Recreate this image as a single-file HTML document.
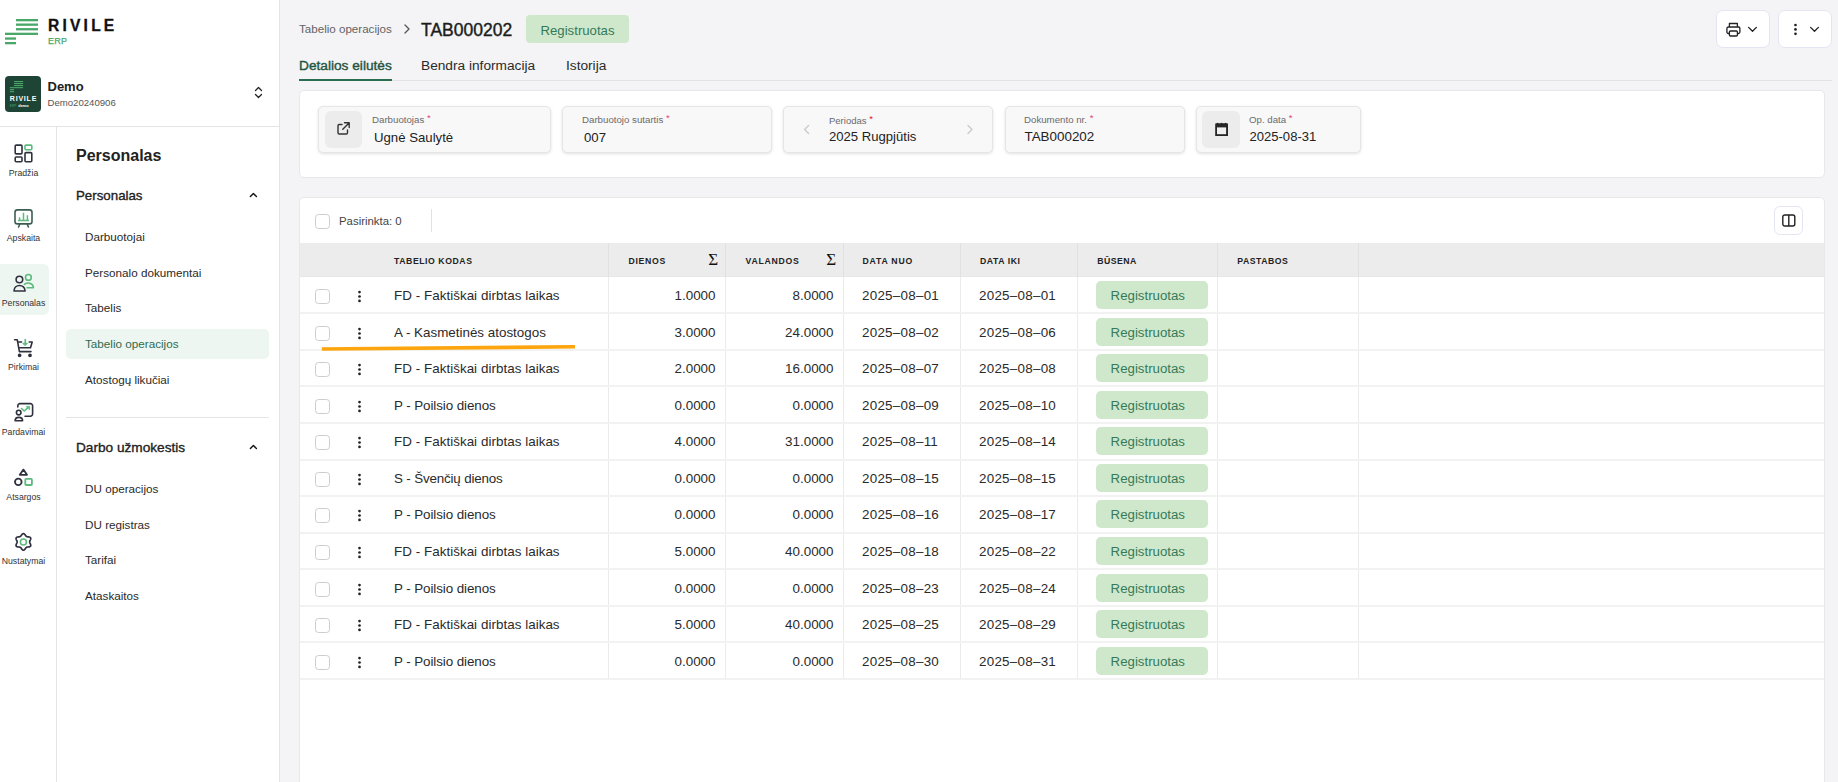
<!DOCTYPE html>
<html lang="lt">
<head>
<meta charset="utf-8">
<title>Tabelio operacijos</title>
<style>
*{box-sizing:border-box;margin:0;padding:0}
html,body{width:1838px;height:782px;overflow:hidden}
body{font-family:"Liberation Sans",sans-serif;background:#f4f4f6;color:#222;position:relative;font-size:13px}
.abs{position:absolute}
#side{position:absolute;left:0;top:0;width:280px;height:782px;background:#fff;border-right:1px solid #e4e4e7}
#rail{position:absolute;left:0;top:127px;width:57px;height:655px;border-right:1px solid #e4e4e7}
#sidehr{position:absolute;left:0;top:126px;width:280px;height:1px;background:#e4e4e7}
.t{position:absolute;white-space:nowrap;line-height:1}
.ri{position:absolute;left:0;width:47px;text-align:center;font-size:8.700px;color:#333;line-height:1}
.mi{position:absolute;left:85px;font-size:11.7px;color:#2a2a2a;line-height:1;white-space:nowrap}

.btn{background:#fff;border:1px solid #e3e6f0;border-radius:7px}
.card{background:#fff;border:1px solid #e8e8eb;border-radius:5px}
.fld{background:#f8f8f9;border:1px solid #e6e6e8;border-radius:5px;box-shadow:0 1px 3px rgba(0,0,0,.12)}
.ib{width:37px;height:37px;border-radius:6px;background:#ececec}
.lb{font-size:9.7px;color:#6a6a6a}
.rq{color:#e0457b;position:relative;top:-2px}
.vl{font-size:13.2px;color:#222}
.cb{width:15px;height:15px;border:1px solid #cdcdd0;border-radius:3.500px;background:#fff}
.th{position:absolute;top:257px;font-size:8.700px;font-weight:700;letter-spacing:.7px;color:#222;line-height:1;white-space:nowrap}
.vln{position:absolute;top:277px;width:1px;height:403px;background:#ebebec}
.vlh{position:absolute;top:243px;width:1px;height:34px;background:#e1e1e2}
.hl{position:absolute;left:300px;width:1524px;height:2px;background:#f2f2f3}
.c{position:absolute;font-size:13.400px;color:#2a2a2a;line-height:1;white-space:nowrap}
.r{text-align:right}
.bd{position:absolute;left:1096px;width:112px;height:28px;border-radius:5px;background:#cfe8cc;color:#357a58;font-size:13.250px;line-height:30px;padding-left:14.600px;overflow:hidden}
.dt{letter-spacing:.26px}
.sh{font-size:13.3px;color:#222;-webkit-text-stroke:.35px #222}
svg{overflow:visible}
</style>
</head>
<body>
<div id="side">
  <div id="sidehr"></div>
  <div id="rail"></div>

  <svg class="abs" style="left:0;top:0" width="60" height="60" viewBox="0 0 60 60">
    <g fill="#49a869">
      <rect x="16" y="19" width="22" height="2.3"/>
      <rect x="16" y="23.5" width="22" height="2.3"/>
      <rect x="16" y="28.1" width="22" height="2.3"/>
      <rect x="5" y="32.7" width="33" height="2.3"/>
      <rect x="5" y="37.4" width="11" height="2.3"/>
      <rect x="5" y="42" width="11" height="2.3"/>
    </g>
  </svg>
  <div class="t" id="lg1" style="left:48px;top:18.200px;font-size:15.600px;font-weight:700;letter-spacing:3.200px;color:#111;-webkit-text-stroke:.3px #111">RIVILE</div>
  <div class="t" id="lg2" style="left:48px;top:37px;font-size:9px;letter-spacing:.3px;color:#49a869;-webkit-text-stroke:.25px #49a869">ERP</div>

  <div class="abs" style="left:5px;top:76px;width:36px;height:36px;border-radius:4px;background:#1d4434"></div>
  <svg class="abs" style="left:5px;top:76px" width="36" height="36" viewBox="0 0 36 36">
    <g fill="#49a869">
      <rect x="9.1" y="5" width="9" height="1.1"/>
      <rect x="9.1" y="7" width="9" height="1.1"/>
      <rect x="9.1" y="9" width="9" height="1.1"/>
      <rect x="4.85" y="11.1" width="13.25" height="1.1"/>
      <rect x="4.85" y="13.1" width="4.25" height="1.1"/>
      <rect x="4.85" y="15.1" width="4.25" height="1.1"/>
    </g>
    <text x="4.85" y="25.1" font-family="Liberation Sans, sans-serif" font-size="7" font-weight="700" fill="#fff" letter-spacing=".78">RIVILE</text>
    <text x="4.85" y="30.9" font-family="Liberation Sans, sans-serif" font-size="3.4" fill="#49a869" textLength="6.6" lengthAdjust="spacingAndGlyphs">ERP</text>
    <text x="13.3" y="30.9" font-family="Liberation Sans, sans-serif" font-size="3.6" font-weight="700" fill="#fff" textLength="10.4" lengthAdjust="spacingAndGlyphs">demo</text>
  </svg>
  <div class="t" style="left:47.500px;top:80px;font-size:13px;font-weight:700;color:#222">Demo</div>
  <div class="t" style="left:47.500px;top:98px;font-size:9.600px;color:#555">Demo20240906</div>
  <svg class="abs" style="left:252px;top:84px" width="12" height="16" viewBox="0 0 12 16" fill="none" stroke="#222" stroke-width="1.3" stroke-linecap="round" stroke-linejoin="round"><g transform="translate(0.5 0.5)"><path d="M3 6 L6 3 L9 6"/><path d="M3 10 L6 13 L9 10"/></g></svg>
  <div class="abs" style="left:0;top:264px;width:49px;height:51px;border-radius:0 6px 6px 0;background:#eef6f1"></div>
  <div class="ri" style="top:169px">Pradžia</div>
  <div class="ri" style="top:234px">Apskaita</div>
  <div class="ri" style="top:299px">Personalas</div>
  <div class="ri" style="top:363px">Pirkimai</div>
  <div class="ri" style="top:428px">Pardavimai</div>
  <div class="ri" style="top:493px">Atsargos</div>
  <div class="ri" style="top:557px">Nustatymai</div>


  <svg class="abs" style="left:0;top:0" width="57" height="782" viewBox="0 0 57 782" fill="none" stroke-width="1.6" stroke-linecap="round" stroke-linejoin="round">
    <!-- Pradzia -->
    <g stroke="#2f323e">
      <rect x="15.2" y="145.1" width="6.8" height="8.8" rx="1"/>
      <rect x="15.2" y="157" width="6.8" height="4.8" rx="1"/>
      <rect x="25" y="152.6" width="6.8" height="9.2" rx="1"/>
    </g>
    <rect x="25" y="145.1" width="6.8" height="4.6" rx="1" stroke="#5cba7d"/>
    <!-- Apskaita -->
    <g stroke="#3c5e51">
      <rect x="15" y="209.9" width="17" height="14" rx="2.4"/>
      <path d="M19.6 224.5 L18.6 227 M27.4 224.5 L28.4 227"/>
    </g>
    <g stroke="#5cba7d" stroke-width="1.5" stroke-linecap="butt">
      <path d="M19.6 220.6 V217.3 M23.5 220.6 V212.8 M27.4 220.6 V215.3 M18 220.4 H29"/>
    </g>
    <!-- Personalas -->
    <g stroke="#2f323e">
      <circle cx="19.4" cy="279.5" r="3.3"/>
      <path d="M14 291 C14 283.600 25.100 283.600 25.100 291 Z"/>
    </g>
    <g stroke="#5cba7d">
      <circle cx="28.4" cy="277.400" r="2.9"/>
      <path d="M24.400 284.300 C28.500 281.600 33.400 283.600 33.400 287.700 H27"/>
    </g>
    <!-- Pirkimai -->
    <g stroke="#2f323e">
      <path d="M14.600 339.800 H17.300 L19.400 351.600 H31"/>
      <path d="M18.300 342 H21.600 M29.200 342 H32.200 L30.500 347.700 H19.500"/>
      <circle cx="19.600" cy="355.300" r="1.100" fill="#2f323e"/>
      <circle cx="30" cy="355.300" r="1.100" fill="#2f323e"/>
    </g>
    <g stroke="#5cba7d" fill="#5cba7d">
      <path d="M25.300 339.600 V343" />
      <path d="M23.200 343.300 H27.400 L25.300 345.400 Z" stroke-width="1"/>
    </g>
    <!-- Pardavimai -->
    <g stroke="#2f323e">
      <path d="M17.800 407 V405.800 A2.200 2.200 0 0 1 20 403.600 H30.400 A2.200 2.200 0 0 1 32.600 405.800 V414 A2.200 2.200 0 0 1 30.400 416.200 H25"/>
      <circle cx="18.700" cy="412.600" r="2.300"/>
      <path d="M15.100 420.800 C15.100 416.200 22.600 416.200 22.600 420.800 Z"/>
    </g>
    <g stroke="#5cba7d" fill="#5cba7d">
      <path d="M21.500 408.500 L24.200 411 L28 407.600" fill="none"/>
      <path d="M26.600 406.400 H29.600 V409.600 Z" stroke-width=".8"/>
    </g>
    <!-- Atsargos -->
    <g stroke="#2f323e" stroke-width="1.8">
      <path d="M23.400 469.600 L27 474.800 H19.800 Z"/>
      <circle cx="18.300" cy="481.900" r="3.300"/>
    </g>
    <rect x="25.300" y="478.900" width="6.600" height="6.100" rx=".8" stroke="#5cba7d" stroke-width="1.8"/>
    <!-- Nustatymai -->
    <path d="M23.40 533.60 L24.11 533.80 L24.73 534.34 L25.24 535.03 L25.67 535.67 L26.09 536.14 L26.55 536.44 L27.05 536.69 L27.66 536.82 L28.43 536.87 L29.28 536.97 L30.06 537.24 L30.59 537.75 L30.77 538.47 L30.61 539.27 L30.27 540.06 L29.93 540.75 L29.74 541.35 L29.70 541.90 L29.74 542.45 L29.93 543.05 L30.27 543.74 L30.61 544.53 L30.77 545.33 L30.59 546.05 L30.06 546.56 L29.28 546.83 L28.43 546.93 L27.66 546.98 L27.05 547.11 L26.55 547.36 L26.09 547.66 L25.67 548.13 L25.24 548.77 L24.73 549.46 L24.11 550.00 L23.40 550.20 L22.69 550.00 L22.07 549.46 L21.56 548.77 L21.13 548.13 L20.71 547.66 L20.25 547.36 L19.75 547.11 L19.14 546.98 L18.37 546.93 L17.52 546.83 L16.74 546.56 L16.21 546.05 L16.03 545.33 L16.19 544.53 L16.53 543.74 L16.87 543.05 L17.06 542.45 L17.10 541.90 L17.06 541.35 L16.87 540.75 L16.53 540.06 L16.19 539.27 L16.03 538.47 L16.21 537.75 L16.74 537.24 L17.52 536.97 L18.37 536.87 L19.14 536.82 L19.75 536.69 L20.25 536.44 L20.71 536.14 L21.13 535.67 L21.56 535.03 L22.07 534.34 L22.69 533.80Z" stroke="#2f323e" stroke-width="1.7"/>
    <circle cx="23.400" cy="541.900" r="3" stroke="#5cba7d" stroke-width="1.5"/>
  </svg>
  <div class="t" id="h1" style="left:76px;top:148px;font-size:16px;font-weight:700;color:#222">Personalas</div>
  <div class="t sh" id="h2" style="left:76px;top:189px">Personalas</div>
  <svg class="abs" style="left:248px;top:190px" width="10" height="10" viewBox="0 0 10 10" fill="none" stroke="#111" stroke-width="1.4" stroke-linecap="round" stroke-linejoin="round"><g transform="translate(0.4 0.0)"><path d="M2 6.5 L5 3.5 L8 6.5"/></g></svg>
  <div class="abs" style="left:66px;top:329px;width:203px;height:30px;border-radius:5px;background:#eef6f1"></div>
  <div class="mi" style="top:231px">Darbuotojai</div>
  <div class="mi" style="top:267px">Personalo dokumentai</div>
  <div class="mi" style="top:302px">Tabelis</div>
  <div class="mi" style="top:338px;color:#2f6b50">Tabelio operacijos</div>
  <div class="mi" style="top:374px">Atostogų likučiai</div>
  <div class="abs" style="left:66px;top:417px;width:203px;height:1px;background:#e4e4e7"></div>
  <div class="t sh" id="h3" style="left:76px;top:441px;font-size:13.650px">Darbo užmokestis</div>
  <svg class="abs" style="left:248px;top:442px" width="10" height="10" viewBox="0 0 10 10" fill="none" stroke="#111" stroke-width="1.4" stroke-linecap="round" stroke-linejoin="round"><g transform="translate(0.4 0.0)"><path d="M2 6.5 L5 3.5 L8 6.5"/></g></svg>
  <div class="mi" style="top:483px">DU operacijos</div>
  <div class="mi" style="top:519px">DU registras</div>
  <div class="mi" style="top:554px">Tarifai</div>
  <div class="mi" style="top:590px">Ataskaitos</div>
</div>
<div id="main">
  <div class="t" style="left:299px;top:23px;font-size:11.600px;color:#636363">Tabelio operacijos</div>
  <svg class="abs" style="left:402px;top:23px" width="10" height="12" viewBox="0 0 10 12" fill="none" stroke="#555" stroke-width="1.3" stroke-linecap="round" stroke-linejoin="round"><path d="M3 2 L7 6 L3 10"/></svg>
  <div class="t" style="left:421px;top:22px;font-size:17.5px;color:#1c1c1c;-webkit-text-stroke:.4px #1c1c1c">TAB000202</div>
  <div class="abs" style="left:526px;top:15px;width:103px;height:28px;border-radius:4px;background:#cfe8cc"></div>
  <div class="t" style="left:540.5px;top:24px;font-size:13.2px;color:#357a58">Registruotas</div>

  <div class="abs btn" style="left:1716px;top:10px;width:54px;height:38px"></div>
  <div class="abs btn" style="left:1778px;top:10px;width:54px;height:38px"></div>
  <svg class="abs" style="left:1725px;top:21px" width="16" height="16" viewBox="0 0 16 16" fill="none" stroke="#222" stroke-width="1.3" stroke-linejoin="round"><g transform="translate(0.4 0.5)"><path d="M4 5.5V2h8v3.5"/><rect x="1.5" y="5.5" width="13" height="6.5" rx="1.5"/><rect x="4" y="9.5" width="8" height="5" rx="1" fill="#fff"/></g></svg>
  <svg class="abs" style="left:1747px;top:25px" width="10" height="8" viewBox="0 0 10 8" fill="none" stroke="#222" stroke-width="1.3" stroke-linecap="round" stroke-linejoin="round"><g transform="translate(0.5 0.35)"><path d="M1.100 2 L5 5.900 L8.900 2"/></g></svg>
  <svg class="abs" style="left:1792px;top:22px" width="6" height="14" viewBox="0 0 6 14" fill="#222"><g transform="translate(0.5 0.4)"><circle cx="3" cy="2.600" r="1.350"/><circle cx="3" cy="7" r="1.350"/><circle cx="3" cy="11.400" r="1.350"/></g></svg>
  <svg class="abs" style="left:1809px;top:25px" width="10" height="8" viewBox="0 0 10 8" fill="none" stroke="#222" stroke-width="1.3" stroke-linecap="round" stroke-linejoin="round"><g transform="translate(0.5 0.35)"><path d="M1.100 2 L5 5.900 L8.900 2"/></g></svg>

  <div class="abs" style="left:299px;top:80px;width:1533px;height:1px;background:#e2e2e6"></div>
  <div class="abs" style="left:299px;top:79px;width:93px;height:2px;background:#2b6e4f"></div>
  <div class="t" style="left:299px;top:59px;font-size:13.7px;color:#24543e;-webkit-text-stroke:.4px #24543e">Detalios eilutės</div>
  <div class="t" style="left:421px;top:59px;font-size:13.7px;color:#2a2a2a">Bendra informacija</div>
  <div class="t" style="left:566px;top:59px;font-size:13.7px;color:#2a2a2a">Istorija</div>

  <div class="abs card" style="left:299px;top:90px;width:1526px;height:88px"></div>
  <div class="abs fld" style="left:318px;top:106px;width:233px;height:47px"></div>
  <div class="abs fld" style="left:562px;top:106px;width:210px;height:47px"></div>
  <div class="abs fld" style="left:783px;top:106px;width:210px;height:47px"></div>
  <div class="abs fld" style="left:1005px;top:106px;width:180px;height:47px"></div>
  <div class="abs fld" style="left:1196px;top:106px;width:165px;height:47px"></div>
  <div class="abs ib" style="left:325px;top:111px"></div>
  <div class="abs ib" style="left:1202px;top:111px;width:38px"></div>
  <svg class="abs" style="left:336px;top:121px" width="15" height="15" viewBox="0 0 15 15" fill="none" stroke="#333" stroke-width="1.4" stroke-linecap="round" stroke-linejoin="round"><path d="M6 3.5H3.2a1.2 1.2 0 0 0-1.2 1.2v7.1a1.2 1.2 0 0 0 1.2 1.2h7.1a1.2 1.2 0 0 0 1.2-1.2V9"/><path d="M8.5 1.8h4.7v4.7M13 2 L6.8 8.2"/></svg>
  <svg class="abs" style="left:1210px;top:118px" width="24" height="24" viewBox="1210 118 24 24"><path d="M1215.200 124.200 q0-.9 .9-.9 h.5 l1-.5 1 .5 h2 l1-.5 1 .5 h2 l1-.5 1 .5 h.5 q.9 0 .9 .9 V135.900 H1215.200 Z" fill="#262626"/><rect x="1217" y="127.400" width="9.100" height="6.800" fill="#f0f0f0"/></svg>

  <div class="t lb" style="left:372px;top:115px">Darbuotojas <span class="rq">*</span></div>
  <div class="t vl" style="left:374px;top:131px">Ugnė Saulytė</div>
  <div class="t lb" style="left:582px;top:115px">Darbuotojo sutartis <span class="rq">*</span></div>
  <div class="t vl" style="left:584px;top:131px">007</div>
  <div class="t lb" style="left:829px;top:116px;font-size:9.5px">Periodas <span class="rq" style="color:#d22">*</span></div>
  <div class="t vl" style="left:829px;top:130px;font-size:13.1px">2025 Rugpjūtis</div>
  <svg class="abs" style="left:802px;top:123px" width="8" height="12" viewBox="0 0 8 12" fill="none" stroke="#cbcbcd" stroke-width="1.4" stroke-linecap="round" stroke-linejoin="round"><g transform="translate(0.6 0.4)"><path d="M6 2 L2 6 L6 10"/></g></svg>
  <svg class="abs" style="left:966px;top:123px" width="8" height="12" viewBox="0 0 8 12" fill="none" stroke="#cbcbcd" stroke-width="1.4" stroke-linecap="round" stroke-linejoin="round"><g transform="translate(0.0 0.4)"><path d="M2 2 L6 6 L2 10"/></g></svg>
  <div class="t lb" style="left:1024px;top:115px">Dokumento nr. <span class="rq">*</span></div>
  <div class="t vl" style="left:1024.5px;top:130.300px;font-size:13.4px">TAB000202</div>
  <div class="t lb" style="left:1249px;top:115px">Op. data <span class="rq">*</span></div>
  <div class="t vl" style="left:1249.5px;top:130.300px;font-size:13.05px">2025-08-31</div>

  <div class="abs card" style="left:299px;top:197px;width:1526px;height:600px"></div>
  <div class="abs cb" style="left:315px;top:214px"></div>
  <div class="t" style="left:339px;top:216px;font-size:11.400px;color:#444">Pasirinkta: 0</div>
  <div class="abs" style="left:431px;top:209px;width:1px;height:23px;background:#e2e2e6"></div>
  <div class="abs btn" style="left:1774px;top:206px;width:29px;height:29px;border-radius:6px"></div>
  <svg class="abs" style="left:1781px;top:213px" width="15" height="14" viewBox="0 0 15 14" fill="none" stroke="#222" stroke-width="1.4" stroke-linejoin="round"><g transform="translate(0.3 0.5)"><rect x="1.5" y="1.5" width="12" height="11" rx="2"/><path d="M7.5 1.5v11"/></g></svg>
<!--TB-->
  <div class="abs" style="left:300px;top:243px;width:1524px;height:34px;background:#ececec;border-bottom:1px solid #e7e7e7"></div>
  <div class="th" style="left:394px;letter-spacing:0.56px">TABELIO KODAS</div>
  <div class="th" style="left:628.5px;letter-spacing:0.7px">DIENOS</div>
  <div class="th" style="left:745.5px;letter-spacing:0.75px">VALANDOS</div>
  <div class="th" style="left:862.5px;letter-spacing:0.78px">DATA NUO</div>
  <div class="th" style="left:980px;letter-spacing:0.55px">DATA IKI</div>
  <div class="th" style="left:1097.3px;letter-spacing:0.48px">BŪSENA</div>
  <div class="th" style="left:1237.3px;letter-spacing:0.5px">PASTABOS</div>
  <div class="t" style="left:708.2px;top:251px;font-size:17px;font-family:'Liberation Serif',serif;color:#111">Σ</div>
  <div class="t" style="left:826.2px;top:251px;font-size:17px;font-family:'Liberation Serif',serif;color:#111">Σ</div>
  <div class="vln" style="left:608px"></div><div class="vlh" style="left:608px"></div>
  <div class="vln" style="left:725px"></div><div class="vlh" style="left:725px"></div>
  <div class="vln" style="left:843px"></div><div class="vlh" style="left:843px"></div>
  <div class="vln" style="left:960px"></div><div class="vlh" style="left:960px"></div>
  <div class="vln" style="left:1077px"></div><div class="vlh" style="left:1077px"></div>
  <div class="vln" style="left:1217px"></div><div class="vlh" style="left:1217px"></div>
  <div class="vln" style="left:1358px"></div><div class="vlh" style="left:1358px"></div>
  <div class="hl" style="top:312px"></div>
  <div class="abs cb" style="left:315px;top:289px"></div>
  <svg class="abs" style="left:356px;top:289px" width="6" height="15" viewBox="0 0 6 15" fill="#222"><g transform="translate(0.5 0.0)"><circle cx="3" cy="3.1" r="1.35"/><circle cx="3" cy="7.500" r="1.35"/><circle cx="3" cy="11.900" r="1.35"/></g></svg>
  <div class="c" style="left:394px;top:288.5px;letter-spacing:0.04px">FD - Faktiškai dirbtas laikas</div>
  <div class="c r" style="left:615px;width:100.500px;top:288.5px">1.0000</div>
  <div class="c r" style="left:733px;width:100.500px;top:288.5px">8.0000</div>
  <div class="c dt" style="left:862px;top:288.5px">2025–08–01</div>
  <div class="c dt" style="left:979px;top:288.5px">2025–08–01</div>
  <div class="bd" style="top:281px">Registruotas</div>
  <div class="hl" style="top:349px"></div>
  <div class="abs cb" style="left:315px;top:326px"></div>
  <svg class="abs" style="left:356px;top:326px" width="6" height="15" viewBox="0 0 6 15" fill="#222"><g transform="translate(0.5 0.0)"><circle cx="3" cy="3.1" r="1.35"/><circle cx="3" cy="7.500" r="1.35"/><circle cx="3" cy="11.900" r="1.35"/></g></svg>
  <div class="c" style="left:394px;top:325.5px;letter-spacing:0.0px">A - Kasmetinės atostogos</div>
  <div class="c r" style="left:615px;width:100.500px;top:325.5px">3.0000</div>
  <div class="c r" style="left:733px;width:100.500px;top:325.5px">24.0000</div>
  <div class="c dt" style="left:862px;top:325.5px">2025–08–02</div>
  <div class="c dt" style="left:979px;top:325.5px">2025–08–06</div>
  <div class="bd" style="top:318px">Registruotas</div>
  <div class="hl" style="top:385px"></div>
  <div class="abs cb" style="left:315px;top:362px"></div>
  <svg class="abs" style="left:356px;top:362px" width="6" height="15" viewBox="0 0 6 15" fill="#222"><g transform="translate(0.5 0.0)"><circle cx="3" cy="3.1" r="1.35"/><circle cx="3" cy="7.500" r="1.35"/><circle cx="3" cy="11.900" r="1.35"/></g></svg>
  <div class="c" style="left:394px;top:361.5px;letter-spacing:0.04px">FD - Faktiškai dirbtas laikas</div>
  <div class="c r" style="left:615px;width:100.500px;top:361.5px">2.0000</div>
  <div class="c r" style="left:733px;width:100.500px;top:361.5px">16.0000</div>
  <div class="c dt" style="left:862px;top:361.5px">2025–08–07</div>
  <div class="c dt" style="left:979px;top:361.5px">2025–08–08</div>
  <div class="bd" style="top:354px">Registruotas</div>
  <div class="hl" style="top:422px"></div>
  <div class="abs cb" style="left:315px;top:399px"></div>
  <svg class="abs" style="left:356px;top:399px" width="6" height="15" viewBox="0 0 6 15" fill="#222"><g transform="translate(0.5 0.0)"><circle cx="3" cy="3.1" r="1.35"/><circle cx="3" cy="7.500" r="1.35"/><circle cx="3" cy="11.900" r="1.35"/></g></svg>
  <div class="c" style="left:394px;top:398.5px;letter-spacing:-0.09px">P - Poilsio dienos</div>
  <div class="c r" style="left:615px;width:100.500px;top:398.5px">0.0000</div>
  <div class="c r" style="left:733px;width:100.500px;top:398.5px">0.0000</div>
  <div class="c dt" style="left:862px;top:398.5px">2025–08–09</div>
  <div class="c dt" style="left:979px;top:398.5px">2025–08–10</div>
  <div class="bd" style="top:391px">Registruotas</div>
  <div class="hl" style="top:459px"></div>
  <div class="abs cb" style="left:315px;top:435px"></div>
  <svg class="abs" style="left:356px;top:435px" width="6" height="15" viewBox="0 0 6 15" fill="#222"><g transform="translate(0.5 0.0)"><circle cx="3" cy="3.1" r="1.35"/><circle cx="3" cy="7.500" r="1.35"/><circle cx="3" cy="11.900" r="1.35"/></g></svg>
  <div class="c" style="left:394px;top:434.5px;letter-spacing:0.04px">FD - Faktiškai dirbtas laikas</div>
  <div class="c r" style="left:615px;width:100.500px;top:434.5px">4.0000</div>
  <div class="c r" style="left:733px;width:100.500px;top:434.5px">31.0000</div>
  <div class="c dt" style="left:862px;top:434.5px">2025–08–11</div>
  <div class="c dt" style="left:979px;top:434.5px">2025–08–14</div>
  <div class="bd" style="top:427px">Registruotas</div>
  <div class="hl" style="top:495px"></div>
  <div class="abs cb" style="left:315px;top:472px"></div>
  <svg class="abs" style="left:356px;top:472px" width="6" height="15" viewBox="0 0 6 15" fill="#222"><g transform="translate(0.5 0.0)"><circle cx="3" cy="3.1" r="1.35"/><circle cx="3" cy="7.500" r="1.35"/><circle cx="3" cy="11.900" r="1.35"/></g></svg>
  <div class="c" style="left:394px;top:471.5px;letter-spacing:-0.17px">S - Švenčių dienos</div>
  <div class="c r" style="left:615px;width:100.500px;top:471.5px">0.0000</div>
  <div class="c r" style="left:733px;width:100.500px;top:471.5px">0.0000</div>
  <div class="c dt" style="left:862px;top:471.5px">2025–08–15</div>
  <div class="c dt" style="left:979px;top:471.5px">2025–08–15</div>
  <div class="bd" style="top:464px">Registruotas</div>
  <div class="hl" style="top:532px"></div>
  <div class="abs cb" style="left:315px;top:508px"></div>
  <svg class="abs" style="left:356px;top:508px" width="6" height="15" viewBox="0 0 6 15" fill="#222"><g transform="translate(0.5 0.0)"><circle cx="3" cy="3.1" r="1.35"/><circle cx="3" cy="7.500" r="1.35"/><circle cx="3" cy="11.900" r="1.35"/></g></svg>
  <div class="c" style="left:394px;top:507.5px;letter-spacing:-0.09px">P - Poilsio dienos</div>
  <div class="c r" style="left:615px;width:100.500px;top:507.5px">0.0000</div>
  <div class="c r" style="left:733px;width:100.500px;top:507.5px">0.0000</div>
  <div class="c dt" style="left:862px;top:507.5px">2025–08–16</div>
  <div class="c dt" style="left:979px;top:507.5px">2025–08–17</div>
  <div class="bd" style="top:500px">Registruotas</div>
  <div class="hl" style="top:568px"></div>
  <div class="abs cb" style="left:315px;top:545px"></div>
  <svg class="abs" style="left:356px;top:545px" width="6" height="15" viewBox="0 0 6 15" fill="#222"><g transform="translate(0.5 0.0)"><circle cx="3" cy="3.1" r="1.35"/><circle cx="3" cy="7.500" r="1.35"/><circle cx="3" cy="11.900" r="1.35"/></g></svg>
  <div class="c" style="left:394px;top:544.5px;letter-spacing:0.04px">FD - Faktiškai dirbtas laikas</div>
  <div class="c r" style="left:615px;width:100.500px;top:544.5px">5.0000</div>
  <div class="c r" style="left:733px;width:100.500px;top:544.5px">40.0000</div>
  <div class="c dt" style="left:862px;top:544.5px">2025–08–18</div>
  <div class="c dt" style="left:979px;top:544.5px">2025–08–22</div>
  <div class="bd" style="top:537px">Registruotas</div>
  <div class="hl" style="top:605px"></div>
  <div class="abs cb" style="left:315px;top:582px"></div>
  <svg class="abs" style="left:356px;top:582px" width="6" height="15" viewBox="0 0 6 15" fill="#222"><g transform="translate(0.5 0.0)"><circle cx="3" cy="3.1" r="1.35"/><circle cx="3" cy="7.500" r="1.35"/><circle cx="3" cy="11.900" r="1.35"/></g></svg>
  <div class="c" style="left:394px;top:581.5px;letter-spacing:-0.09px">P - Poilsio dienos</div>
  <div class="c r" style="left:615px;width:100.500px;top:581.5px">0.0000</div>
  <div class="c r" style="left:733px;width:100.500px;top:581.5px">0.0000</div>
  <div class="c dt" style="left:862px;top:581.5px">2025–08–23</div>
  <div class="c dt" style="left:979px;top:581.5px">2025–08–24</div>
  <div class="bd" style="top:574px">Registruotas</div>
  <div class="hl" style="top:641px"></div>
  <div class="abs cb" style="left:315px;top:618px"></div>
  <svg class="abs" style="left:356px;top:618px" width="6" height="15" viewBox="0 0 6 15" fill="#222"><g transform="translate(0.5 0.0)"><circle cx="3" cy="3.1" r="1.35"/><circle cx="3" cy="7.500" r="1.35"/><circle cx="3" cy="11.900" r="1.35"/></g></svg>
  <div class="c" style="left:394px;top:617.5px;letter-spacing:0.04px">FD - Faktiškai dirbtas laikas</div>
  <div class="c r" style="left:615px;width:100.500px;top:617.5px">5.0000</div>
  <div class="c r" style="left:733px;width:100.500px;top:617.5px">40.0000</div>
  <div class="c dt" style="left:862px;top:617.5px">2025–08–25</div>
  <div class="c dt" style="left:979px;top:617.5px">2025–08–29</div>
  <div class="bd" style="top:610px">Registruotas</div>
  <div class="hl" style="top:678px"></div>
  <div class="abs cb" style="left:315px;top:655px"></div>
  <svg class="abs" style="left:356px;top:655px" width="6" height="15" viewBox="0 0 6 15" fill="#222"><g transform="translate(0.5 0.0)"><circle cx="3" cy="3.1" r="1.35"/><circle cx="3" cy="7.500" r="1.35"/><circle cx="3" cy="11.900" r="1.35"/></g></svg>
  <div class="c" style="left:394px;top:654.5px;letter-spacing:-0.09px">P - Poilsio dienos</div>
  <div class="c r" style="left:615px;width:100.500px;top:654.5px">0.0000</div>
  <div class="c r" style="left:733px;width:100.500px;top:654.5px">0.0000</div>
  <div class="c dt" style="left:862px;top:654.5px">2025–08–30</div>
  <div class="c dt" style="left:979px;top:654.5px">2025–08–31</div>
  <div class="bd" style="top:647px">Registruotas</div>
  <svg class="abs" style="left:315px;top:340px" width="270" height="16" viewBox="315 340 270 16"><polygon points="321.800,347.300 575,345 575,348.600 321.800,350.700" fill="#fda50f"/></svg>
<!--/TB-->
</div>
</body>
</html>
